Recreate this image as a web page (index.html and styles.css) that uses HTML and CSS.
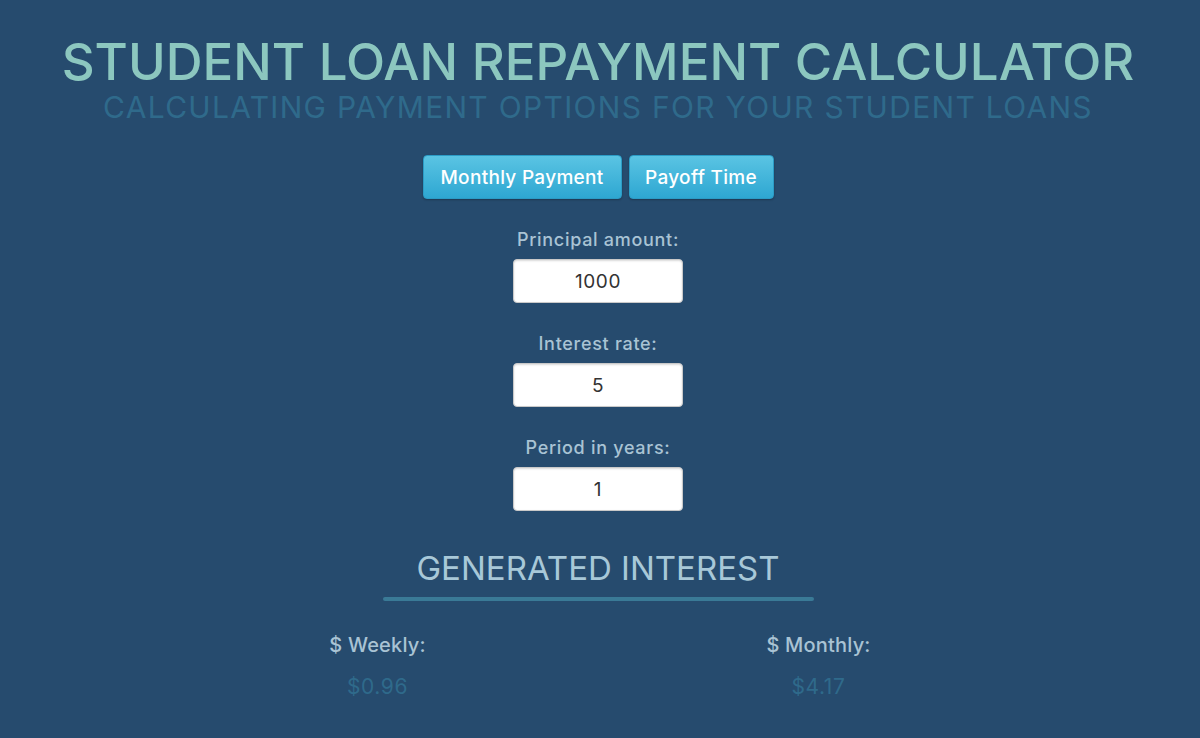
FILE: index.html
```html
<!DOCTYPE html>
<html lang="en">
<head>
<meta charset="utf-8">
<title>Student Loan Repayment Calculator</title>
<link rel="stylesheet" href="styles.css">
</head>
<body>
<main class="page">
  <header class="header">
    <h1 class="title">STUDENT LOAN REPAYMENT CALCULATOR</h1>
    <h2 class="subtitle">CALCULATING PAYMENT OPTIONS FOR YOUR STUDENT LOANS</h2>
  </header>
  <div class="tabs">
    <button class="tab tab-wide">Monthly Payment</button>
    <button class="tab tab-narrow">Payoff Time</button>
  </div>
  <form class="form">
    <label class="field">
      <span class="field-label">Principal amount:</span>
      <input class="field-input" type="text" value="1000">
    </label>
    <label class="field">
      <span class="field-label">Interest rate:</span>
      <input class="field-input" type="text" value="5">
    </label>
    <label class="field">
      <span class="field-label">Period in years:</span>
      <input class="field-input" type="text" value="1">
    </label>
  </form>
  <section class="results">
    <h3 class="results-title">GENERATED INTEREST</h3>
    <div class="results-rule"></div>
    <div class="results-grid">
      <div class="result">
        <div class="result-label">$ Weekly:</div>
        <div class="result-value">$0.96</div>
      </div>
      <div class="result">
        <div class="result-label">$ Monthly:</div>
        <div class="result-value">$4.17</div>
      </div>
    </div>
  </section>
</main>
</body>
</html>
```
FILE: styles.css
```css
html, body {
  margin: 0;
  padding: 0;
  background: #264b6e;
  height: 100%;
}
body {
  font-family: "Inter", "Noto Sans", sans-serif;
  color: #a9c3d4;
  overflow: hidden;
}
.page {
  display: flex;
  flex-direction: column;
  align-items: center;
  padding-right: 4px;
}
.header {
  display: flex;
  flex-direction: column;
  align-items: center;
  padding-top: 35px;
}
.title {
  margin: 0;
  font-size: 51px;
  line-height: 54px;
  font-weight: 500;
  color: #8cc7bf;
  letter-spacing: 0;
}
.subtitle {
  margin: 0;
  font-size: 30px;
  line-height: 36px;
  font-weight: 400;
  color: #2f6a8b;
  letter-spacing: 1.3px;
}
.tabs {
  display: flex;
  gap: 7px;
  margin-top: 30px;
}
.tab {
  height: 44px;
  border: 1px solid #2b9cc6;
  border-radius: 4px;
  background: linear-gradient(#5ac4e3, #2ea7d2);
  color: #ffffff;
  font-family: inherit;
  font-size: 19px;
  font-weight: 500;
  letter-spacing: 0.3px;
  padding: 0;
  box-shadow: 0 1px 2px rgba(0,0,0,0.25);
}
.tab-wide { width: 199px; }
.tab-narrow { width: 145px; }
.form {
  display: flex;
  flex-direction: column;
  align-items: center;
  gap: 30px;
  margin-top: 30px;
}
.field {
  display: flex;
  flex-direction: column;
  align-items: center;
  gap: 9px;
}
.field-label {
  font-size: 18px;
  line-height: 21px;
  font-weight: 500;
  letter-spacing: 0.7px;
  color: #a9c3d4;
}
.field-input {
  width: 170px;
  height: 44px;
  box-sizing: border-box;
  border: 1px solid #c9c9c9;
  border-radius: 4px;
  background: #ffffff;
  color: #333333;
  font-family: inherit;
  font-size: 19px;
  letter-spacing: 0.6px;
  text-align: center;
  padding: 0;
  box-shadow: inset 0 1px 2px rgba(0,0,0,0.15);
}
.results {
  display: flex;
  flex-direction: column;
  align-items: center;
  margin-top: 37px;
}
.results-title {
  margin: 0;
  font-size: 33px;
  line-height: 40px;
  font-weight: 400;
  letter-spacing: 0;
  color: #a8c8d8;
}
.results-rule {
  width: 431px;
  height: 4px;
  border-radius: 2px;
  background: #3a7a96;
  margin-top: 9px;
}
.results-grid {
  display: grid;
  grid-template-columns: 441px 441px;
  margin-top: 32px;
}
.result {
  display: flex;
  flex-direction: column;
  align-items: center;
  gap: 18px;
}
.result-label {
  font-size: 20px;
  line-height: 24px;
  font-weight: 500;
  letter-spacing: 0.2px;
  color: #a9c3d4;
}
.result-value {
  font-size: 21px;
  line-height: 24px;
  font-weight: 400;
  letter-spacing: 0.6px;
  color: #2f6a8b;
}
```
